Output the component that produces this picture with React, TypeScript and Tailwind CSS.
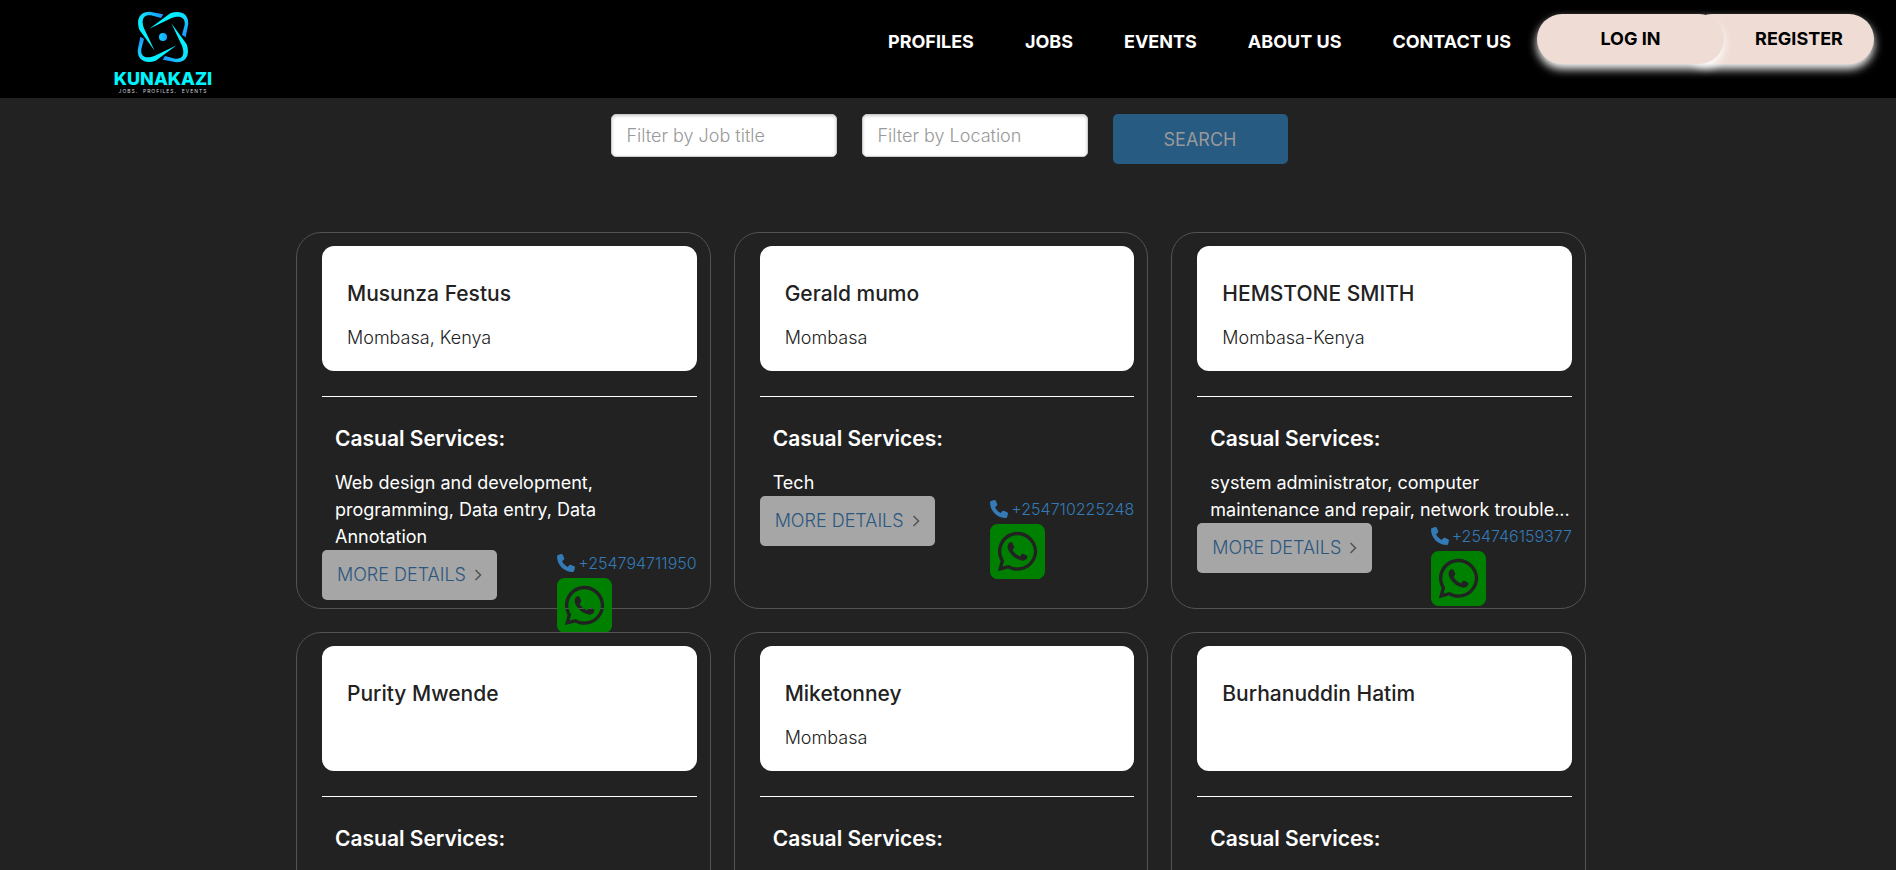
import { FaPhone, FaSquareWhatsapp } from "react-icons/fa6";

type Profile = {
  name: string;
  location?: string;
  services?: string;
  phone?: string;
};

const profiles: Profile[] = [
  {
    name: "Musunza Festus",
    location: "Mombasa, Kenya",
    services: "Web design and development, programming, Data entry, Data\nAnnotation",
    phone: "+254794711950",
  },
  { name: "Gerald mumo", location: "Mombasa", services: "Tech", phone: "+254710225248" },
  {
    name: "HEMSTONE SMITH",
    location: "Mombasa-Kenya",
    services: "system administrator, computer maintenance and repair, network trouble...",
    phone: "+254746159377",
  },
  { name: "Purity Mwende" },
  { name: "Miketonney", location: "Mombasa" },
  { name: "Burhanuddin Hatim" },
];

const links = ["PROFILES", "JOBS", "EVENTS", "ABOUT US", "CONTACT US"];

function Logo() {
  const arm =
    "M197 153 L151 90 C141 62 150 36 182 36 L223 44 L216 55 L186 47 C162 44 156 62 165 86 Z";
  return (
    <a href="#home" className="flex w-[100px] flex-col items-center">
      <svg viewBox="144 34 156 156" className="size-[52px]" aria-hidden="true">
        <defs>
          <linearGradient id="arm" gradientUnits="userSpaceOnUse" x1="150" y1="110" x2="222" y2="44">
            <stop offset="0" stopColor="#00fbff" />
            <stop offset="0.55" stopColor="#0fdcff" />
            <stop offset="1" stopColor="#1e8cff" />
          </linearGradient>
          <linearGradient id="dot">
            <stop offset="0" stopColor="#08d8ff" />
            <stop offset="1" stopColor="#1e9cff" />
          </linearGradient>
        </defs>
        <path d={arm} fill="url(#arm)" />
        <path d={arm} fill="url(#arm)" transform="rotate(90 222 112)" />
        <path d={arm} fill="url(#arm)" transform="rotate(180 222 112)" />
        <path d={arm} fill="url(#arm)" transform="rotate(270 222 112)" />
        <circle cx="222" cy="112" r="12" fill="url(#dot)" />
      </svg>
      <span className="mt-[6px] text-lg leading-5 font-extrabold text-[#00f6ff]">KUNAKAZI</span>
      <span className="text-[5px] leading-[5px] tracking-[1px] whitespace-nowrap text-gray-300">
        JOBS.&nbsp; PROFILES.&nbsp; EVENTS
      </span>
    </a>
  );
}

function Header() {
  const pill =
    "flex h-[50px] w-[187px] items-center justify-center rounded-[25px] bg-[#efdcd5] text-lg font-bold text-black shadow-[0_5px_10px_#ffffff]";
  return (
    <header className="flex h-[98px] items-start justify-between bg-black pr-[22px] pl-[113px]">
      <div className="pt-[11px]">
        <Logo />
      </div>
      <div className="flex items-start gap-[26px] pt-[14px]">
        <nav className="flex gap-[51px] pt-[14px] text-lg leading-7 font-bold text-white">
          {links.map((l) => (
            <a key={l} href={"#" + l.toLowerCase().replace(" ", "-")}>
              {l}
            </a>
          ))}
        </nav>
        <div className="flex">
          <a href="#login" className={pill + " z-10"}>
            LOG IN
          </a>
          <a href="#register" className={pill + " -ml-[37px] pl-[37px]"}>
            REGISTER
          </a>
        </div>
      </div>
    </header>
  );
}

function Filters() {
  const field =
    "h-[43px] w-[226px] rounded-[5px] border border-[#cccccc] bg-white px-[15px] text-lg font-light text-[#222222] shadow-[inset_0_1px_3px_rgba(0,0,0,0.2)] placeholder:text-[#999999]";
  return (
    <form className="flex items-start justify-center gap-[25px] pt-4 pl-[2px]" onSubmit={(e) => e.preventDefault()}>
      <input type="text" aria-label="Filter by Job title" placeholder="Filter by Job title" className={field} />
      <input type="text" aria-label="Filter by Location" placeholder="Filter by Location" className={field} />
      <button type="submit" className="h-[50px] w-[175px] rounded-[5px] bg-[#275b82] pt-[2px] text-lg text-[#999999]">
        SEARCH
      </button>
    </form>
  );
}

function Card({ profile }: { profile: Profile }) {
  return (
    <article className="h-[377px] rounded-[25px] border border-[#545253] pt-[13px] pr-[13px] pl-[25px]">
      <div className="h-[125px] rounded-xl bg-white px-[25px] pt-8 text-[#222222]">
        <h2 className="text-[21px] leading-8 font-medium">{profile.name}</h2>
        <p className="mt-[15px] text-lg leading-[26px] font-light">{profile.location}</p>
      </div>
      <hr className="mt-[25px] border-white" />
      <div className="pt-[26px] pl-[13px] text-white">
        <h3 className="text-[21px] leading-8 font-semibold">Casual Services:</h3>
        <p className="mt-[14px] text-lg leading-[27px] whitespace-pre-line">{profile.services}</p>
      </div>
      {profile.phone && (
        <div className="flex items-start justify-between">
          <button
            type="button"
            className="flex h-[50px] w-[175px] items-center justify-center gap-2 rounded-[5px] bg-[#a6a6a6] text-lg font-light text-[#2b5780]"
          >
            MORE DETAILS
            <svg viewBox="0 0 8 12" className="h-3 w-2" fill="none" stroke="#555555" strokeWidth="1.6" aria-hidden="true">
              <path d="M1.5 1 L6.5 6 L1.5 11" />
            </svg>
          </button>
          <div className="flex flex-col gap-[2px]">
            <a href={"tel:" + profile.phone} className="flex items-center gap-[3px] text-base leading-[26px] font-light text-[#337ab7]">
              <FaPhone className="size-[18px]" aria-hidden="true" />
              {profile.phone}
            </a>
            <a href={"https://wa.me/" + profile.phone.slice(1)} aria-label="WhatsApp" className="w-[55px]">
              <FaSquareWhatsapp viewBox="0 32 448 448" className="size-[55px] text-[#008000]" />
            </a>
          </div>
        </div>
      )}
    </article>
  );
}

export default function App() {
  return (
    <div className="h-screen overflow-y-auto bg-[#222222] font-['Inter',sans-serif] [scrollbar-width:none]">
      <Header />
      <main>
        <Filters />
        <section className="mx-auto mt-[68px] grid max-w-[1304px] grid-cols-3 gap-[23px] pr-[14px]">
          {profiles.map((p) => (
            <Card key={p.name} profile={p} />
          ))}
        </section>
      </main>
    </div>
  );
}
